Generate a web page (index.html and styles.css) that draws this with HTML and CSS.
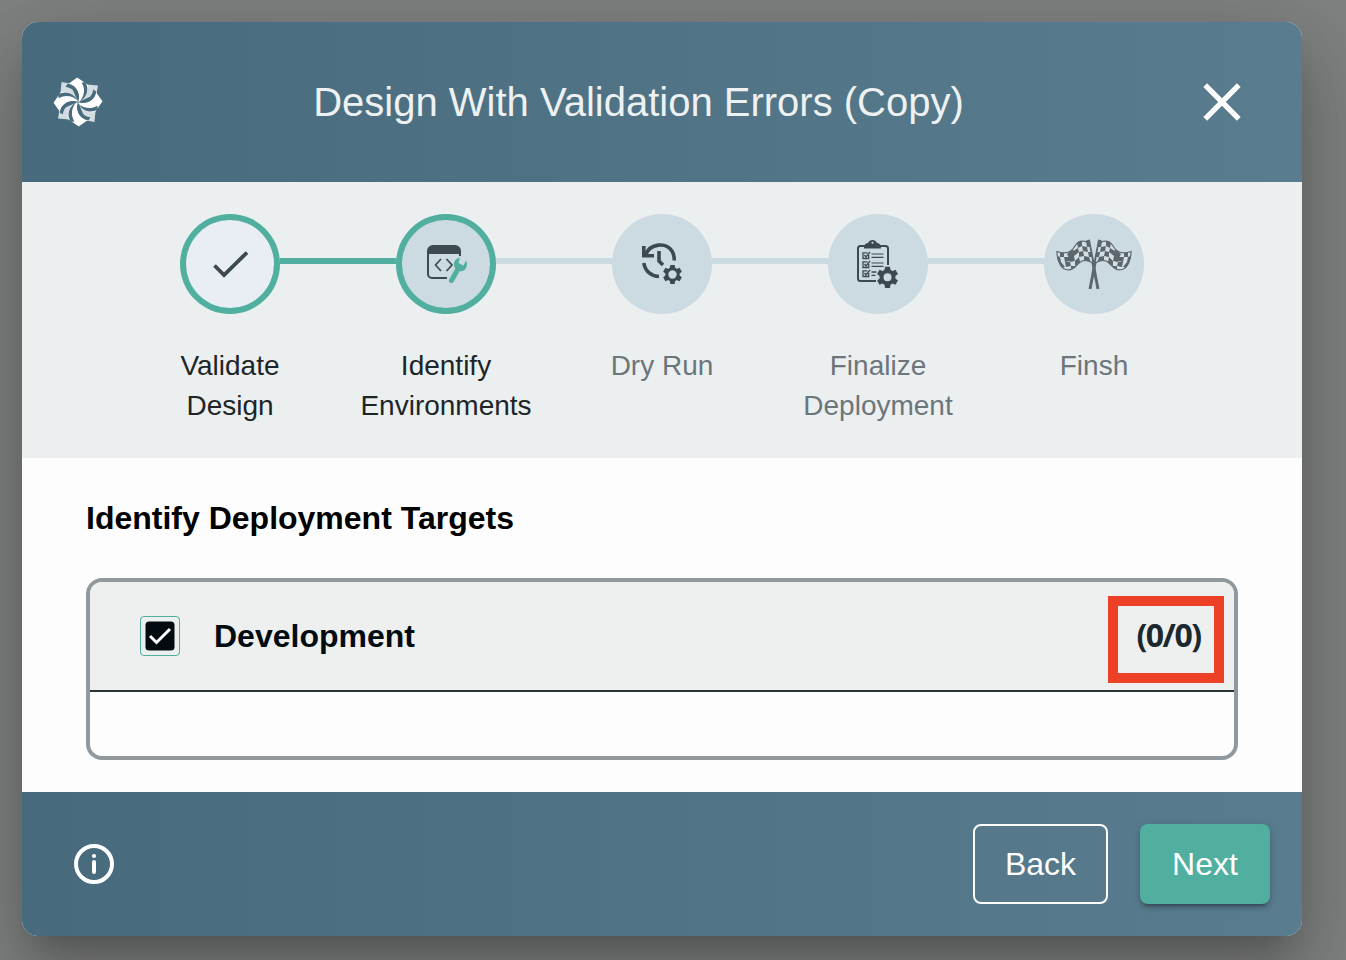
FILE: index.html
```html
<!DOCTYPE html>
<html lang="en">
<head>
<meta charset="utf-8">
<title>Deploy design</title>
<link rel="stylesheet" href="styles.css">
</head>
<body>
<div class="modal">
  <header class="header">
    <svg class="logo" viewBox="-25 -25 50 50">
      <defs>
        <g id="quarter">
          <path d="M0 0L9-17.500L20-16.500L18.500-8Z" fill="#d3dde1"/>
          <path d="M-10.500-17.500L-.8-24.500L9.500-17.500C11.500-13 9-5 1.500-.5L.5-1.500C2-10-3-17-10.500-17.500Z" fill="#fff"/>
        </g>
        <path id="gap" d="M-10.500-18.200C-2.500-17.500 2.200-10 .8-1.500C-.5-9-5-14-12.500-15.300Z"/>
        <g id="gaps"><use href="#gap"/><use href="#gap" transform="rotate(90)"/><use href="#gap" transform="rotate(180)"/><use href="#gap" transform="rotate(270)"/></g>
      </defs>
      <use href="#quarter"/><use href="#quarter" transform="rotate(90)"/><use href="#quarter" transform="rotate(180)"/><use href="#quarter" transform="rotate(270)"/>
      <g fill="#486b7e"><use href="#gaps"/><use href="#gaps" transform="rotate(50)"/></g>
    </svg>
    <h1 class="title">Design With Validation Errors (Copy)</h1>
    <div class="close"><svg width="64" height="64" viewBox="0 0 24 24"><path fill="#fff" d="M19 6.41 17.59 5 12 10.59 6.41 5 5 6.41 10.59 12 5 17.59 6.41 19 12 13.41 17.59 19 19 17.59 13.41 12z"/></svg></div>
  </header>

  <div class="stepper">
    <div class="step done">
      <div class="dot">
        <svg width="100" height="100" viewBox="0 0 100 100"><path d="M34.500 51.500L44 61L67 38.500" fill="none" stroke="#3c494f" stroke-width="3.800"/></svg>
      </div>
      <div class="label">Validate<br>Design</div>
    </div>
    <div class="step current">
      <div class="dot">
        <svg width="100" height="100" viewBox="0 0 100 100">
          <path d="M31 40V37a6 6 0 0 1 6-6H59a6 6 0 0 1 6 6V40Z" fill="#3c494f"/>
          <path d="M32 38V60a4 4 0 0 0 4 4H51M64 38V42" fill="none" stroke="#3c494f" stroke-width="2"/>
          <path d="M45 45L39.500 51L45 57M50.500 45L56 51L50.500 57" fill="none" stroke="#3c494f" stroke-width="1.700"/>
          <path d="M55 65.500L62 53" stroke="#ccdae1" stroke-width="7.500"/>
          <path d="M55.500 66.500L62.500 54" stroke="#50af9f" stroke-width="5" stroke-linecap="round"/>
          <path d="M64 43.800C59 44.500 57 48.500 58.500 53C60 57 66 59 69 55.500C71.300 53 71.600 49.500 70 46.500L67.500 51.500L62.500 49Z" fill="#50af9f"/>
        </svg>
      </div>
      <div class="label">Identify<br>Environments</div>
    </div>
    <div class="step">
      <div class="dot">
        <svg width="100" height="100" viewBox="0 0 100 100">
          <g fill="none" stroke="#3c494f" stroke-width="3.600">
            <path d="M31.800 32V41.800H42"/>
            <path d="M33.500 41C38 29 54 28 60 37C61.500 39.500 62.300 43 62.300 46.500"/>
            <path d="M31.800 49C33 57 39 62 47 62.500"/>
            <path d="M47 37V47L51 51"/>
          </g>
          <g transform="translate(60.500 60.500)" fill="#3c494f">
            <g id="teeth"><path id="tooth" d="M-2.200-9.500H2.200L2.800-5H-2.800Z"/><use href="#tooth" transform="rotate(60)"/><use href="#tooth" transform="rotate(120)"/><use href="#tooth" transform="rotate(180)"/><use href="#tooth" transform="rotate(240)"/><use href="#tooth" transform="rotate(300)"/></g>
            <circle r="5.700" fill="none" stroke="#3c494f" stroke-width="3"/>
          </g>
        </svg>
      </div>
      <div class="label">Dry Run</div>
    </div>
    <div class="step">
      <div class="dot">
        <svg width="100" height="100" viewBox="0 0 100 100">
          <path d="M48 67H32.500a2.500 2.500 0 0 1-2.500-2.500V34.500a2.500 2.500 0 0 1 2.500-2.500H57.500a2.500 2.500 0 0 1 2.500 2.500V51" fill="none" stroke="#3c494f" stroke-width="2"/>
          <path d="M36 34.500C36 31 37 29.500 40 29C41.500 25 47.500 25 49 29C52 29.500 53 31 53 34.500Z" fill="#3c494f"/>
          <circle cx="44.500" cy="28.700" r="1" fill="#ccdae1"/>
          <g fill="none" stroke="#3c494f" stroke-width="1.300">
            <g id="row"><path d="M39.500 38.800H35V44.500H40.700V41M36.500 41L38 43L42 38"/><path d="M43.500 40H55.500M43.500 43.300H55.500" stroke-width="1.200"/></g>
            <use href="#row" y="9"/>
            <path d="M39.500 56.800H35V62.500H40.700V59M36.500 59L38 61L42 56"/><path d="M43.500 58H48.500M43.500 61.300H47.500"/>
          </g>
          <g transform="translate(59.500 63.300)">
            <circle r="9" fill="#ccdae1"/>
            <g fill="#3c494f"><use href="#teeth" transform="scale(1.120)"/></g>
            <circle r="6" fill="none" stroke="#3c494f" stroke-width="4"/>
          </g>
        </svg>
      </div>
      <div class="label">Finalize<br>Deployment</div>
    </div>
    <div class="step">
      <div class="dot">
        <svg width="100" height="100" viewBox="0 0 100 100">
          <defs>
            <clipPath id="cloth"><path d="M54 32C57 26 65 25 69 32C73 39 80 40 87 37.500C87 45 84 54 78 55.500C72 57 69 53 65 49C61 45 56 46 51 49Z"/></clipPath>
            <g id="flag">
              <path d="M55.500 26L46 75" stroke="#5c676d" stroke-width="2.900"/>
              <path d="M54 25.500L59 27L57 29L54 29Z" fill="#5c676d"/>
              <g clip-path="url(#cloth)">
                <path d="M50 24H88V58H50Z" fill="#d4dfe4"/>
                <g fill="#5c676d">
                  <path d="M51 25L58 27L57 33L51 33ZM57 33L62 32L61 37L56 38ZM62 26L67 29L66 34L62 32ZM66 34L71 37L70 42L65 38ZM71 35L77 40L75 44L70 42ZM75 43L80 43L79 48L74 47ZM80 38L84 38L84 43L80 43ZM84 43L89 41L87 48L83 48ZM51 38L56 38L55 43L50 43ZM61 37L65 38L65 43L60 42ZM70 42L75 44L74 48L69 47ZM55 43L60 42L60 48L53 49ZM65 43L69 47L69 52L64 48ZM74 48L79 48L78 53L73 52ZM83 48L86 48L84 54L79 53ZM69 52L73 52L73 58L68 56Z"/>
                </g>
              </g>
              <path d="M54 32C57 26 65 25 69 32C73 39 80 40 87 37.500C87 45 84 54 78 55.500C72 57 69 53 65 49C61 45 56 46 51 49Z" fill="none" stroke="#5c676d" stroke-width="1.200"/>
            </g>
          </defs>
          <use href="#flag"/><use href="#flag" transform="matrix(-1 0 0 1 100 0)"/>
        </svg>
      </div>
      <div class="label">Finsh</div>
    </div>
  </div>

  <main class="body">
    <h2 class="heading">Identify Deployment Targets</h2>
    <section class="card">
      <div class="row">
        <div class="check"><svg width="38" height="38" viewBox="0 0 38 38"><rect x="4.500" y="4.500" width="29" height="29" rx="3.500" fill="#020b10"/><path d="M9 19L15.500 25.500L29 12" fill="none" stroke="#fff" stroke-width="3"/></svg></div>
        <span class="env">Development</span>
        <span class="count">(0/0)</span>
      </div>
      <div class="empty"></div>
    </section>
  </main>

  <footer class="footer">
    <svg class="info" width="40" height="40" viewBox="0 0 40 40"><circle cx="20" cy="20" r="18" fill="none" stroke="#fff" stroke-width="4"/><circle cx="20" cy="12" r="2.100" fill="#fff"/><path d="M20 18V28" stroke="#fff" stroke-width="4" stroke-linecap="round"/></svg>
    <button class="btn back">Back</button>
    <button class="btn next">Next</button>
  </footer>
</div>
</body>
</html>
```
FILE: styles.css
```css
* { box-sizing: border-box; }
body {
  margin: 0;
  height: 960px;
  padding: 22px 44px 24px 22px;
  overflow: hidden;
  background: #7f8280;
  font-family: "Liberation Sans", Arial, sans-serif;
}
svg { display: block; }
.modal {
  height: 914px;
  border-radius: 16px;
  overflow: hidden;
  background: #fdfdfd;
  box-shadow: 0 22px 30px -14px rgba(0,0,0,.2), 0 48px 76px 6px rgba(0,0,0,.14), 0 18px 92px 16px rgba(0,0,0,.12);
}
.header, .footer {
  display: flex;
  align-items: center;
  padding: 0 32px;
  background: linear-gradient(90deg, #476a7d, #597c8f);
}
.header { height: 160px; }
.logo { width: 50px; height: 50px; margin-left: -1px; }
.title {
  flex: 1;
  margin: 0;
  text-align: center;
  color: #eef1f2;
  font-size: 40px;
  line-height: 64px;
  font-weight: 400;
}
.close { width: 96px; display: flex; justify-content: center; }
.close svg { width: 64px; height: 64px; }
.stepper {
  display: flex;
  height: 276px;
  padding: 32px 100px 0;
  background: #ebeff0;
}
.step {
  position: relative;
  flex: 1;
  display: flex;
  flex-direction: column;
  align-items: center;
  gap: 32px;
  color: #6b767b;
}
.step + .step::before {
  content: "";
  position: absolute;
  top: 44px;
  left: -58px;
  width: 118px;
  height: 6px;
  background: #ccdae1;
}
.step.current::before { background: #50af9f; }
.dot {
  position: relative;
  width: 100px;
  height: 100px;
  border-radius: 50%;
  background: #ccdae1;
}
.done .dot, .current .dot { box-shadow: inset 0 0 0 6px #50af9f; }
.done .dot { background: #e8eef3; }
.done, .current { color: #1d2528; }
.label { font-size: 28px; line-height: 40px; text-align: center; }
.body { height: 334px; padding: 40px 64px 0; }
.heading {
  margin: 0 0 40px;
  font-size: 32px;
  line-height: 40px;
  color: #000;
}
.card {
  height: 182px;
  border: 4px solid #91999e;
  border-radius: 16px;
  overflow: hidden;
}
.row {
  display: flex;
  align-items: center;
  height: 110px;
  padding: 0 10px 0 50px;
  border-bottom: 2px solid #2a3539;
  background: #eef0f0;
}
.check { width: 40px; height: 40px; border: 1px solid #50af9f; border-radius: 4px; }
.env {
  flex: 1;
  margin-left: 34px;
  font-size: 32px;
  font-weight: 700;
  color: #020b10;
}
.count {
  display: flex;
  align-items: center;
  justify-content: center;
  width: 116px;
  height: 87px;
  margin-top: 6px;
  padding: 0 0 8px 5px;
  border: 10px solid #ec4027;
  font: 700 32px/40px "Noto Sans", "Open Sans", sans-serif;
  letter-spacing: -1.5px;
  color: #1b292f;
}
.footer { height: 144px; }
.info { margin: 0 auto 0 20px; }
.btn {
  height: 80px;
  padding: 0;
  border-radius: 8px;
  font: 32px/40px "Liberation Sans", Arial, sans-serif;
  color: #fff;
}
.back { width: 135px; border: 2px solid #fff; background: transparent; margin-right: 32px; }
.next {
  width: 130px;
  border: 0;
  background: #50af9f;
  box-shadow: 0 6px 2px -4px rgba(0,0,0,.2), 0 4px 4px rgba(0,0,0,.14), 0 2px 10px rgba(0,0,0,.12);
}
```
